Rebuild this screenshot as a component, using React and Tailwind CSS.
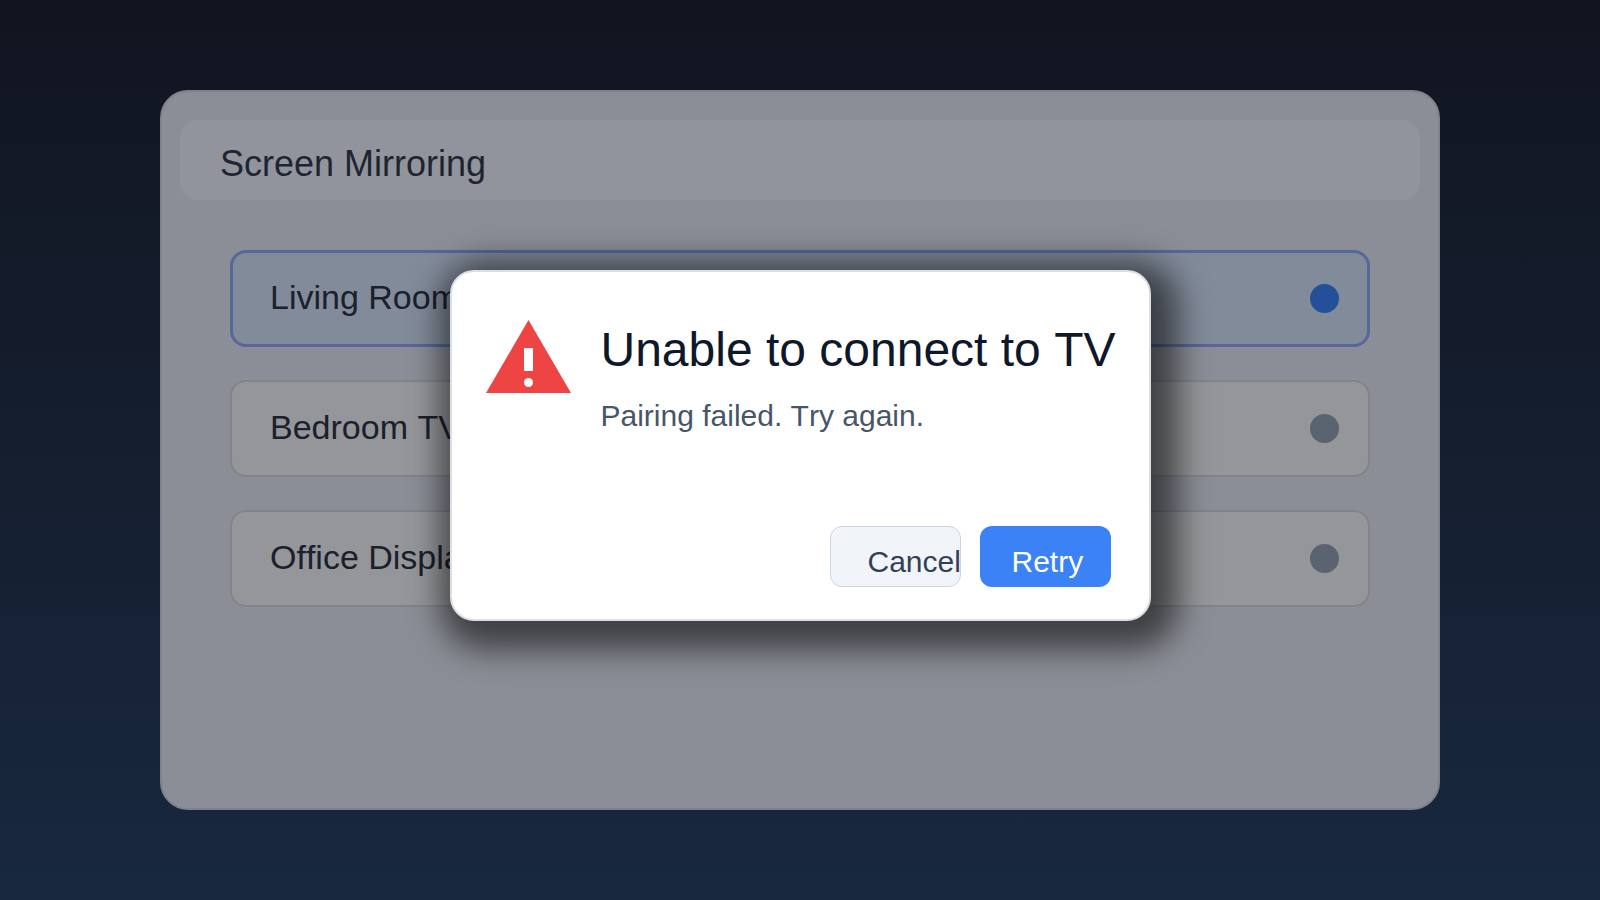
const devices = [
  { id: 'living', name: 'Living Room TV', selected: true },
  { id: 'bedroom', name: 'Bedroom TV', selected: false },
  { id: 'office', name: 'Office Display', selected: false },
];

function DeviceRow({ name, selected }) {
  return (
    <li>
      <button
        type="button"
        className={`
          flex w-full h-[97px] items-center justify-between rounded-2xl text-left text-[34px] leading-10 text-[#1a202c]
          ${selected
            ? 'border-3 border-[#54699a] bg-[#828b9a] pl-[37px] pr-[28px]'
            : 'border-2 border-[#80858b] bg-[#949699] pl-[38px] pr-[29px]'
          }
        `}
      >
        <span className="pb-1">{name}</span>
        <span className={`size-[29px] rounded-full ${selected ? 'bg-[#24509a]' : 'bg-[#5a6470]'}`} />
      </button>
    </li>
  );
}

function WarningIcon() {
  return (
    <svg className="w-[85px] h-[73px] shrink-0" viewBox="0 0 85 73" aria-hidden="true">
      <path d="M42.5 0 85 73H0Z" fill="#ef4444" />
      <rect x="38" y="28" width="9" height="23" fill="#fff" />
      <circle cx="42.5" cy="62.5" r="4.5" fill="#fff" />
    </svg>
  );
}

function ErrorDialog() {
  return (
    <div className="absolute inset-0 flex items-start justify-center pt-[30vh]">
      {/* Dialog */}
      <div
        role="alertdialog"
        aria-labelledby="error-title"
        aria-describedby="error-text"
        className="flex w-full max-w-[701px] min-h-[351px] flex-col justify-between rounded-3xl border-2 border-[#dcdee2] bg-white pl-[34px] pr-8 pt-12 pb-8 shadow-[9px_10px_32px_18px_rgba(0,0,0,0.56)]"
      >
        <div className="flex gap-[30px]">
          <WarningIcon />
          <div className="pt-0.5">
            <h2 id="error-title" className="whitespace-nowrap text-[48px] leading-14 text-[#0f172a]">
              Unable to connect to TV
            </h2>
            <p id="error-text" className="mt-[18px] text-[30px] leading-10 text-[#475569]">
              Pairing failed. Try again.
            </p>
          </div>
        </div>

        {/* Actions */}
        <div className="flex justify-end gap-[19px] pr-1.5">
          <button
            type="button"
            className="w-[131px] h-[61px] rounded-xl border border-[#cbd5e1] bg-[#f1f5f9] pl-[37px] pt-2.5 text-left text-[30px] leading-10 text-[#334155]"
          >
            Cancel
          </button>
          <button
            type="button"
            className="w-[131px] h-[61px] rounded-xl bg-[#3b82f6] pl-8 pt-2.5 text-left text-[30px] leading-10 text-white"
          >
            Retry
          </button>
        </div>
      </div>
    </div>
  );
}

export default function App() {
  return (
    <div className="relative min-h-screen bg-linear-to-b from-[#111520] to-[#18283f] px-[10vw] py-[10vh] font-['Liberation_Sans',Arial,sans-serif] [font-kerning:none]">
      {/* Panel */}
      <main className="min-h-[80vh] rounded-[28px] border-2 border-[#7d828b] bg-[#8b8e96] px-[18px] pt-7">
        <header className="flex h-20 items-center rounded-[18px] bg-[#91949c] px-10 pt-2">
          <h1 className="text-4xl leading-10 text-[#1e2530]">Screen Mirroring</h1>
        </header>
        <ul className="mt-[50px] flex flex-col gap-[33px] px-[50px]">
          {devices.map((device) => (
            <DeviceRow key={device.id} name={device.name} selected={device.selected} />
          ))}
        </ul>
      </main>

      <ErrorDialog />
    </div>
  );
}
